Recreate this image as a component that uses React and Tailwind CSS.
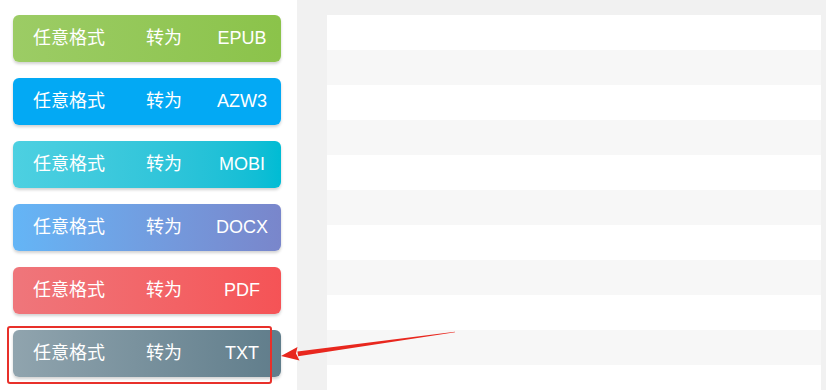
import React from 'react';

// Conversion buttons, top to bottom
const buttons = [
    { target: 'EPUB', bg: 'bg-gradient-to-r from-[#9ccc65] to-[#8bc34a]' },
    { target: 'AZW3', bg: 'bg-gradient-to-r from-[#03a9f4] to-[#03a9f4]' },
    { target: 'MOBI', bg: 'bg-gradient-to-r from-[#4dd0e1] to-[#00bcd4]' },
    { target: 'DOCX', bg: 'bg-gradient-to-r from-[#64b5f6] to-[#7986cb]' },
    { target: 'PDF', bg: 'bg-gradient-to-r from-[#ef767b] to-[#f55356]' },
    { target: 'TXT', bg: 'bg-gradient-to-r from-[#90a4ae] to-[#607d8b]', marked: true },
];

const ConvertButton = ({ target, bg, marked }) => (
    <div className="relative">
        <div
            className={`${bg} h-[47px] w-[268px] rounded-[6px] flex items-center text-white text-[18px] shadow-[0_2px_3px_rgba(0,0,0,0.18)]`}
            style={{ fontFamily: '"Liberation Sans", "Noto Sans CJK SC", sans-serif' }}
        >
            <span className="pl-[20px] w-[133px]">任意格式</span>
            <span className="w-[66px]">转为</span>
            <span className="w-[60px] text-center font-medium">{target}</span>
        </div>
        {marked && (
            <div className="absolute left-[-6px] top-[-4px] w-[265px] h-[58px] border-[2.5px] border-[#e8302a] rounded-[3px]" />
        )}
    </div>
);

export default function App() {
    return (
        <div className="relative flex w-[826px] h-[390px] overflow-hidden bg-white">
            {/* left column with buttons */}
            <div className="w-[297px] shrink-0 bg-white pt-[15px] pl-[13px] flex flex-col gap-[16px]">
                {buttons.map((b) => (
                    <ConvertButton key={b.target} {...b} />
                ))}
            </div>

            {/* right area with striped list */}
            <div className="flex-1 bg-[#f1f1f1] pt-[15px] pl-[30px] pr-[5px]">
                {Array.from({ length: 11 }).map((_, i) => (
                    <div key={i} className={`h-[35px] ${i % 2 === 0 ? 'bg-white' : 'bg-[#f7f7f7]'}`} />
                ))}
            </div>

            {/* pointer arrow */}
            <svg className="absolute left-0 top-0 pointer-events-none" width="826" height="390">
                <polygon
                    points="455,331.7 455,332.3 298.2,356.2 297.4,351.4"
                    fill="#e8271e"
                />
                <polygon
                    points="281,356 299.5,360.5 296,353.6 297.5,347"
                    fill="#e8271e"
                />
            </svg>
        </div>
    );
}
